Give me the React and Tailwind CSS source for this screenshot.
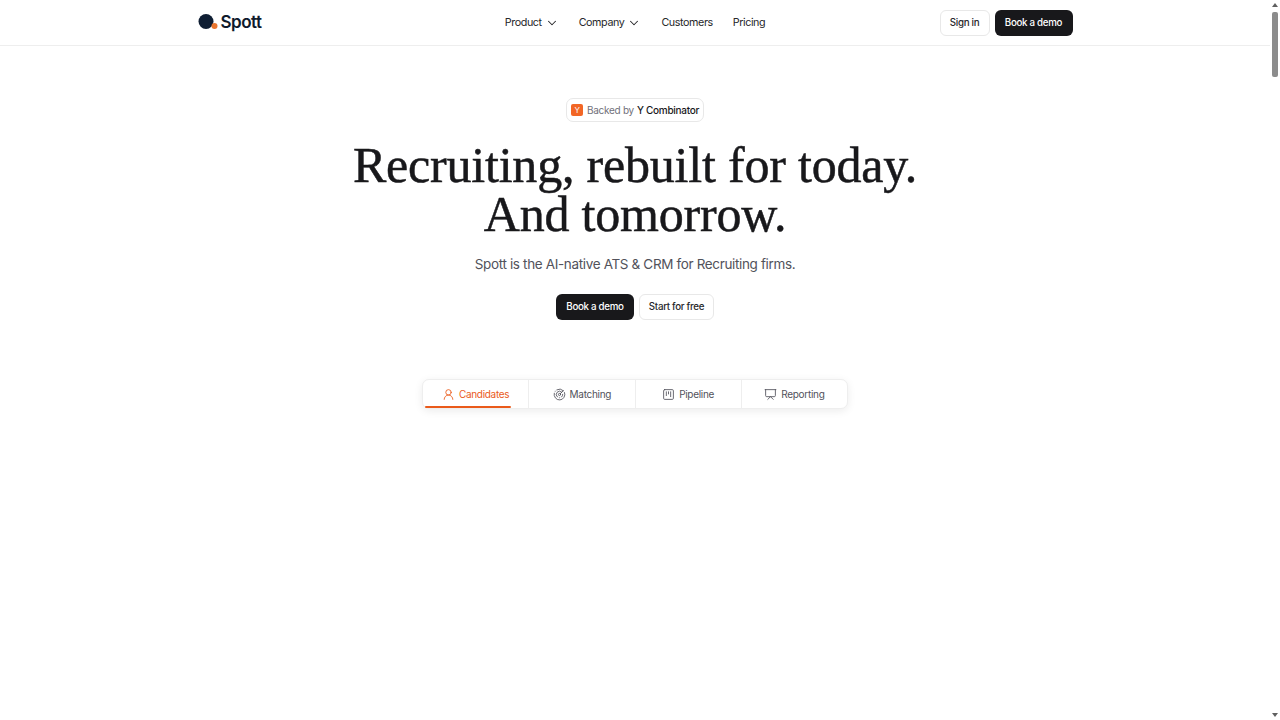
import React from "react";
import { ChevronDown, UserRound, Radar, SquareKanban, Presentation } from "lucide-react";

function Logo() {
  return (
    <div className="flex items-center gap-[3px]">
      <svg width="20" height="16" viewBox="0 0 20 16" className="mt-[-2px]">
        <circle cx="8" cy="7.5" r="7.5" fill="#0f1e33" />
        <circle cx="16.5" cy="12" r="3" fill="#e9752f" />
      </svg>
      <span className="text-[17px] leading-[22px] font-semibold tracking-[-0.5px] text-[#0f1a2c] mt-[-1px]">Spott</span>
    </div>
  );
}

function NavItem({ label, chevron }) {
  return (
    <a className="flex items-center gap-[3px] h-[16px] text-[10.75px] leading-[18px] font-normal tracking-[-0.42px] text-[#27272a] whitespace-nowrap">
      {label}
      {chevron && <ChevronDown size={14} strokeWidth={1.8} />}
    </a>
  );
}

function Tab({ icon: Icon, label, active, last }) {
  return (
    <div className={`relative flex-1 flex items-center justify-center gap-[4px] text-[10px] tracking-[-0.3px] whitespace-nowrap ${active ? "text-[#ea5a1a]" : "text-[#52525b]"} ${last ? "" : "border-r border-[#eeeeee]"}`}>
      <Icon size={13} strokeWidth={1.6} />
      {label}
      {active && <span className="absolute left-[2px] right-[17px] bottom-0 h-[2px] rounded-full bg-[#ea5a1a]" />}
    </div>
  );
}

export default function App() {
  return (
    <div className="font-['Inter','Noto_Sans',sans-serif] [font-variation-settings:'opsz'_32] antialiased bg-white h-screen overflow-hidden flex">
      <div className="flex-1 min-w-0">
        <header className="h-[46px] border-b border-[#eeeeee] flex justify-center">
          <div className="w-[875px] flex items-center">
            <div className="flex-1"><Logo /></div>
            <nav className="flex items-center gap-[20px]">
              <NavItem label="Product" chevron />
              <NavItem label="Company" chevron />
              <NavItem label="Customers" />
              <NavItem label="Pricing" />
            </nav>
            <div className="flex-1 flex items-center justify-end gap-[5px]">
              <button className="h-[26px] w-[50px] pt-[1px] rounded-[6px] border border-[#e8e8e8] bg-white text-[9.75px] font-medium tracking-[-0.3px] text-[#27272a]">Sign in</button>
              <button className="h-[26px] w-[78px] pt-[1px] rounded-[6px] bg-[#18181b] text-[9.75px] font-medium tracking-[-0.3px] text-white">Book a demo</button>
            </div>
          </div>
        </header>
        <main className="flex flex-col items-center">
          <div className="mt-[52px] h-[24px] w-[138px] rounded-[7px] border border-[#e8e8e8] flex items-center justify-center gap-[3px] text-[10px] tracking-[-0.28px] whitespace-nowrap">
            <span className="w-[12px] h-[12px] mr-[1px] rounded-[2px] bg-[#f26625] text-white text-[8px] leading-[12px] text-center">Y</span>
            <span className="text-[#71717a]">Backed by</span>
            <span className="text-[#18181b] font-medium">Y Combinator</span>
          </div>
          <h1 className="mt-[19px] font-['Liberation_Serif',serif] text-[50px] leading-[49px] font-normal tracking-[-0.2px] [-webkit-text-stroke:0.5px_#18181b] text-[#18181b] text-center whitespace-nowrap">
            Recruiting, rebuilt for today.
            <br />
            And tomorrow.
          </h1>
          <p className="mt-[15px] text-[13.5px] leading-[20px] tracking-[-0.35px] text-[#52525b]">Spott is the AI-native ATS &amp; CRM for Recruiting firms.</p>
          <div className="mt-[20px] flex gap-[5px]">
            <button className="h-[26px] w-[78px] pt-[1px] rounded-[6px] bg-[#18181b] text-[9.75px] font-medium tracking-[-0.3px] text-white">Book a demo</button>
            <button className="h-[26px] w-[75px] pt-[1px] rounded-[6px] border border-[#e8e8e8] bg-white text-[9.75px] font-medium tracking-[-0.3px] text-[#27272a]">Start for free</button>
          </div>
          <div className="mt-[59px] h-[30px] w-[426px] rounded-[7px] border border-[#eeeeee] bg-white shadow-[0_2px_8px_rgba(0,0,0,0.08)] flex">
            <Tab icon={UserRound} label="Candidates" active />
            <Tab icon={Radar} label="Matching" />
            <Tab icon={SquareKanban} label="Pipeline" />
            <Tab icon={Presentation} label="Reporting" last />
          </div>
        </main>
      </div>
      <div className="w-[10px] h-full bg-white flex flex-col items-center relative">
        <div className="mt-[3px] w-0 h-0 border-x-[3px] border-x-transparent border-b-[4px] border-b-[#606060]" />
        <div className="mt-[5px] w-[6px] h-[65px] rounded-[2px] bg-[#8c8c8c]" />
        <div className="absolute bottom-[3px] w-0 h-0 border-x-[3px] border-x-transparent border-t-[4px] border-t-[#606060]" />
      </div>
    </div>
  );
}
